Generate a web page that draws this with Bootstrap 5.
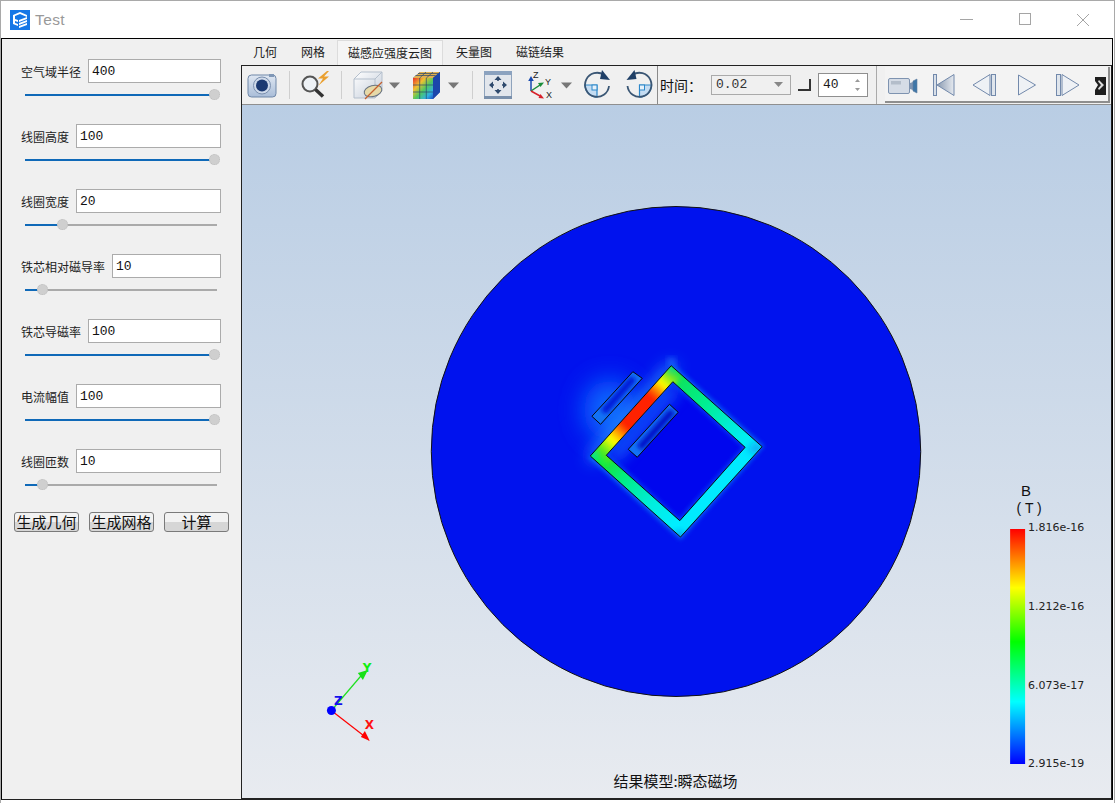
<!DOCTYPE html>
<html lang="zh">
<head>
<meta charset="utf-8">
<title>Test</title>
<link href="https://cdn.jsdelivr.net/npm/bootstrap@5.3.0/dist/css/bootstrap.min.css" rel="stylesheet">
<style>
html,body{margin:0;height:100%;overflow:hidden;background:#fff}
body{font-family:"Noto Sans CJK SC","Liberation Sans",sans-serif;font-size:12px;color:#1a1a1a}
.win{width:1115px;height:803px;border:1px solid #a9a9a9;border-bottom:0;display:flex;flex-direction:column;background:#fff}
.ttl{height:37px;flex:none;display:flex;align-items:center;padding-left:9px;background:#fff}
.ttl-name{font-family:"Liberation Sans",sans-serif;font-size:15.5px;color:#999;margin-left:5px;letter-spacing:.4px;padding-top:1px}
.ttl-btns{margin-left:auto;display:flex;padding-right:2px}
.ttl-btn{width:58px;height:37px;display:flex;align-items:center;justify-content:center}
.body-wrap{flex:1;display:flex;border:1px solid #000;border-bottom:1px solid #222;min-height:0;margin-right:1px;margin-bottom:3px;background:#f0f0f0}
.side{width:239px;flex:none;padding:20px 20px 0 19px;background:#f0f0f0}
.prm{height:65px}
.prm-top{display:flex;align-items:center;gap:7px;height:24px}
.prm-lab{font-size:12px;white-space:nowrap;color:#222;padding-top:2px}
.prm-box{flex:1;min-width:0;height:24px;border:1px solid #ababab;background:#fff;font-family:"Liberation Mono",monospace;font-size:13px;line-height:22px;padding:1px 0 0 3px;color:#111}
.sld{height:2px;margin:11px 4px 0 4px;background:#aaa;position:relative}
.sld-fill{height:2px;background:#0f69b8}
.sld-kn{position:absolute;top:-5px;width:11px;height:11px;border-radius:50%;background:#cfcfcf;border:1px dotted #bdbdbd}
.acts{display:flex;gap:10px;margin-top:-2px;margin-left:-7px;margin-right:-10px}
.act{width:65px;height:20px;flex:none;padding:0;border:1px solid #7a7a7a;border-radius:3px;background:linear-gradient(#f2f2f2 50%,#d6d6d6 50%);font-size:15px;line-height:16px;color:#111;font-family:inherit;white-space:nowrap;overflow:hidden}
.main{flex:1;min-width:0;display:flex;flex-direction:column}
.tabbar{height:26px;flex:none;display:flex;align-items:flex-end;background:#f0f0f0}
.tb{height:24px;padding:0 12px;font-size:12px;line-height:21px;color:#222}
.tb-on{height:25px;line-height:23px;background:#f5f5f5;border:1px solid #dcdcdc;border-bottom:0;padding:0 10px;margin-right:1px}
.view{flex:1;min-height:0;border:1px solid #222;display:flex;flex-direction:column;background:#f0f0f0}
.tools{height:39px;flex:none;display:flex;align-items:stretch;background:#f0f0f0;border-bottom:1px solid #8f8f8f;overflow:hidden}
.tool-ic{display:block;flex:none}
.time-wrap{display:flex;align-items:center;height:38px;border-left:1px solid #8a8a8a;border-right:1px solid #aaa;padding-left:2px;flex:none;width:220px}
.time-lab{font-size:14px;width:51px;flex:none;color:#111;white-space:nowrap}
.combo{width:80px;height:20px;flex:none;border:1px solid #aaa;background:#f0f0f0;font-family:"Liberation Mono",monospace;font-size:13px;padding-left:4px;color:#333;display:flex;align-items:center;justify-content:space-between;padding-right:7px}
.spin{width:50px;height:24px;flex:none;border:1px solid #8f8f8f;background:#fff;font-family:"Liberation Mono",monospace;font-size:13px;padding-left:4px;display:flex;align-items:center;justify-content:space-between;padding-right:6px}
.chk{width:13px;height:12px;flex:none;margin:0 7px;border-right:2px solid #333;border-bottom:2px solid #333}
.player{flex:1;min-width:0;margin:1px 1px 1px 8px;display:flex;background:#f3f3f3;border-bottom:2px solid #8e8e8e;border-right:2px solid #8e8e8e;overflow:hidden}
.scene{flex:1;min-height:0;display:block;width:100%}
.scene text{font-family:"DejaVu Sans","Liberation Sans",sans-serif}
.scene .lg-h{font-family:"Liberation Sans",sans-serif}
.scene .cap{font-family:"Noto Sans CJK SC",sans-serif}
</style>
</head>
<body>
<div class="win">
  <div class="ttl">
    <svg width="20" height="20" viewBox="0 0 20 20"><rect width="20" height="20" fill="#1677e6"/><path d="M3 5l7-3 7 3v2l-7-3-5 2v3l3 1v2l-3-1v2l3 1v2l-5-2zM9 10l8-3v2l-8 3zM9 13l8-3v2l-8 3zM9 16l8-3v2l-8 3z" fill="#fff"/></svg>
    <span class="ttl-name">Test</span>
    <div class="ttl-btns">
      <div class="ttl-btn"><svg width="14" height="2"><rect width="13" height="1" fill="#a5a5a5"/></svg></div>
      <div class="ttl-btn"><svg width="13" height="13"><rect x=".5" y=".5" width="11" height="11" fill="none" stroke="#a5a5a5"/></svg></div>
      <div class="ttl-btn"><svg width="14" height="14"><path d="M1 1l12 12M13 1L1 13" stroke="#a5a5a5" fill="none"/></svg></div>
    </div>
  </div>
  <div class="body-wrap">
    <div class="side">
      <div class="prm"><div class="prm-top"><span class="prm-lab">空气域半径</span><div class="prm-box">400</div></div><div class="sld"><div class="sld-fill" style="width:100%"></div><div class="sld-kn" style="left:184px"></div></div></div>
      <div class="prm"><div class="prm-top"><span class="prm-lab">线圈高度</span><div class="prm-box">100</div></div><div class="sld"><div class="sld-fill" style="width:100%"></div><div class="sld-kn" style="left:184px"></div></div></div>
      <div class="prm"><div class="prm-top"><span class="prm-lab">线圈宽度</span><div class="prm-box">20</div></div><div class="sld"><div class="sld-fill" style="width:19%"></div><div class="sld-kn" style="left:32px"></div></div></div>
      <div class="prm"><div class="prm-top"><span class="prm-lab">铁芯相对磁导率</span><div class="prm-box">10</div></div><div class="sld"><div class="sld-fill" style="width:9%"></div><div class="sld-kn" style="left:12px"></div></div></div>
      <div class="prm"><div class="prm-top"><span class="prm-lab">铁芯导磁率</span><div class="prm-box">100</div></div><div class="sld"><div class="sld-fill" style="width:100%"></div><div class="sld-kn" style="left:184px"></div></div></div>
      <div class="prm"><div class="prm-top"><span class="prm-lab">电流幅值</span><div class="prm-box">100</div></div><div class="sld"><div class="sld-fill" style="width:100%"></div><div class="sld-kn" style="left:184px"></div></div></div>
      <div class="prm"><div class="prm-top"><span class="prm-lab">线圈匝数</span><div class="prm-box">10</div></div><div class="sld"><div class="sld-fill" style="width:9%"></div><div class="sld-kn" style="left:12px"></div></div></div>
      <div class="acts"><button class="act" type="button">生成几何</button><button class="act" type="button">生成网格</button><button class="act" type="button">计算</button></div>
    </div>
    <div class="main">
      <div class="tabbar"><div class="tb">几何</div><div class="tb">网格</div><div class="tb tb-on">磁感应强度云图</div><div class="tb">矢量图</div><div class="tb">磁链结果</div></div>
      <div class="view">
        <div class="tools">
          <svg class="tool-ic" width="415" height="38" viewBox="0 0 415 38">
            <defs>
              <linearGradient id="gb" x1="0" x2="0" y1="0" y2="1"><stop offset="0" stop-color="#dfe7f2"/><stop offset="1" stop-color="#a9bdd8"/></linearGradient>
              <linearGradient id="gc" x1="0" x2="1" y1="0" y2="1"><stop offset="0" stop-color="#fff"/><stop offset="1" stop-color="#c3ccd9"/></linearGradient>
              <linearGradient id="gs" x1="0" x2="1" y1="0" y2="0"><stop offset="0" stop-color="#8a9ab0"/><stop offset="1" stop-color="#e6eaf0"/></linearGradient>
              <linearGradient id="gcube" x1="0" x2="1" y1="0" y2="1"><stop offset="0" stop-color="#e8302a"/><stop offset=".3" stop-color="#f0c030"/><stop offset=".55" stop-color="#50c860"/><stop offset=".8" stop-color="#30b0e0"/><stop offset="1" stop-color="#1a50c8"/></linearGradient>
            </defs>
            <g><rect x="6" y="9" width="28" height="22" rx="3.500" fill="url(#gb)" stroke="#6f87a8"/><rect x="27" y="8" width="5" height="3" fill="#7f97b6"/><circle cx="20" cy="19.500" r="8.500" fill="#cfdaea" stroke="#7a8fae"/><circle cx="20" cy="19.500" r="6" fill="#1c3a72"/></g>
            <rect x="47" y="5" width="1" height="28" fill="#cfcfcf"/>
            <g><circle cx="68" cy="18" r="7.500" fill="#eef2f6" stroke="#555" stroke-width="2"/><path d="M73.500 23.500l7.500 7" stroke="#333" stroke-width="3.500"/><path d="M85 5l-9 7.500h5l-4.500 7 10.500-9h-5l5-5.500z" fill="#eaa030"/></g>
            <rect x="99" y="5" width="1" height="28" fill="#cfcfcf"/>
            <g><path d="M112 13l7-7h21v19l-7 7h-21z" fill="url(#gc)" stroke="#b4bfcc"/><path d="M112 13h21v19M133 13l7-7" fill="none" stroke="#b4bfcc"/><ellipse cx="131" cy="25" rx="9" ry="5.500" fill="#e6d9a8" stroke="#6a7480" transform="rotate(-15 131 25)"/><path d="M123 33L140 16" stroke="#c4602f" stroke-width="1.200"/></g>
            <path d="M147 16.500h11l-5.500 6z" fill="#777"/>
            <g><path d="M171 12l7-6h20v20l-7 7h-20z" fill="#1b3f9e"/><path d="M171 12h20v21h-20z" fill="url(#gcube)"/><path d="M171 12l7-6h20l-7 6z" fill="#e0b050"/><path d="M191 12l7-6v20l-7 7z" fill="#1b46ab"/><path d="M177.700 12v21M184.300 12v21M171 19h20M171 26h20M173.500 9.500h20M176 7.500h20M184 6l-6.300 6M191 6l-6.700 6" stroke="#28476e" stroke-width=".7" fill="none"/></g>
            <path d="M206 16.500h11l-5.500 6z" fill="#777"/>
            <rect x="230" y="5" width="1" height="28" fill="#cfcfcf"/>
            <g><rect x="242.500" y="5.500" width="27" height="27" fill="#e2e6ec" stroke="#8fa3bc"/><rect x="242" y="5" width="28" height="4" fill="#8ba2bf"/><rect x="242" y="30" width="28" height="3" fill="#7a90ac"/><path d="M256 15v-2M256 23v2M252 19h-2M260 19h2" stroke="#2f4a6d" stroke-width="1.600"/><path d="M256 10l-3.500 4h7zM256 28l-3.500-4h7zM247 19l4-3.500v7zM265 19l-4-3.500v7z" fill="#2f4a6d"/></g>
            <g><path d="M289 14v11" stroke="#1749b0" stroke-width="1.500"/><path d="M289 10l-2.800 5h5.600z" fill="#1749b0"/><path d="M289 25l9-6" stroke="#1a8d3a" stroke-width="1.500"/><path d="M302 16.500l-6 .5 2.500 4z" fill="#1a8d3a"/><path d="M289 25l9 5" stroke="#d8202a" stroke-width="1.500"/><path d="M302 32.500l-5.500-.5 2-4z" fill="#d8202a"/><text x="291" y="12" font-size="9" font-family="Liberation Sans" fill="#222">Z</text><text x="303" y="19" font-size="9" font-family="Liberation Sans" fill="#222">Y</text><text x="304" y="32" font-size="9" font-family="Liberation Sans" fill="#222">X</text></g>
            <path d="M319 16.500h11l-5.500 6z" fill="#777"/>
            <path d="M355 19H343A12 12 0 0 0 355 31Z" fill="#c4dcf2" stroke="#2c87c9" stroke-width="1.200"/><rect x="350" y="19" width="5" height="5" fill="#e6f1fa" stroke="#2c87c9"/>
            <path d="M367 20A12 12 0 1 1 362 9" fill="none" stroke="#3a5674" stroke-width="1.800"/><path d="M360 4l8 10-10-1z" fill="#1f3f66"/>
            <path d="M397.500 19H409.500A12 12 0 0 1 397.500 31Z" fill="#c4dcf2" stroke="#2c87c9" stroke-width="1.200"/><rect x="397.500" y="19" width="5" height="5" fill="#e6f1fa" stroke="#2c87c9"/>
            <path d="M385.500 20A12 12 0 1 0 390.500 9" fill="none" stroke="#3a5674" stroke-width="1.800"/><path d="M392.500 4l-8 10 10-1z" fill="#1f3f66"/>
          </svg>
          <div class="time-wrap">
            <span class="time-lab">时间：</span>
            <div class="combo"><span>0.02</span><svg width="9" height="6"><path d="M0 0h9L4.500 5z" fill="#888"/></svg></div>
            <div class="chk"></div>
            <div class="spin"><span>40</span><svg width="7" height="14"><path d="M3.500 1L1 4h5zM3.500 13L1 10h5z" fill="#999"/></svg></div>
          </div>
          <div class="player">
            <svg width="222" height="36" viewBox="0 1 222 36">
              <g><rect x="3.500" y="12.500" width="21" height="15" rx="1.500" fill="#d5dce6" stroke="#7e93b0"/><rect x="6" y="15" width="10" height="3.500" fill="#b3bdca"/><path d="M25 17l3-1v8l-3-1z" fill="#7f96b4"/><path d="M28 15l4-2v14l-4-2z" fill="#3f77a8" stroke="#5f7ea0" stroke-width=".6"/></g>
              <g><rect x="48.500" y="8.500" width="3" height="21" fill="#d8dfe8" stroke="#7289ab"/><path d="M52 19l17-10.500v21z" fill="url(#gs)" stroke="#7289ab"/></g>
              <g><path d="M88 19l17-10.500v21z" fill="#eef1f5" stroke="#7289ab"/><rect x="106.500" y="8.500" width="4" height="21" fill="#dfe5ec" stroke="#7289ab"/></g>
              <g><path d="M133.500 9l17 10-17 10z" fill="#eef1f5" stroke="#7289ab"/></g>
              <g><rect x="171.500" y="8.500" width="4" height="21" fill="#dfe5ec" stroke="#7289ab"/><path d="M177 8.500l17 10.500-17 10.500z" fill="#eef1f5" stroke="#7289ab"/></g>
              <path d="M210 11h11v18h-11v-5l3-5-3-4z" fill="#1e1e1e"/><path d="M214 14l5 5-5 5-1-1.500 3-3.500-3-3.500z" fill="#ddd"/>
            </svg>
          </div>
        </div>
        <svg class="scene" viewBox="0 0 870 693" preserveAspectRatio="none">
          <defs>
            <linearGradient id="bgg" x1="0" x2="0" y1="0" y2="1"><stop offset="0" stop-color="#b9cde4"/><stop offset="1" stop-color="#e8ebf0"/></linearGradient>
            <filter id="bl2" x="-30%" y="-30%" width="160%" height="160%"><feGaussianBlur stdDeviation="2"/></filter>
            <filter id="bl3" x="-30%" y="-30%" width="160%" height="160%"><feGaussianBlur stdDeviation="3.500"/></filter>
            <filter id="bl9" x="-60%" y="-60%" width="220%" height="220%" filterUnits="objectBoundingBox"><feGaussianBlur stdDeviation="8"/></filter>
            <filter id="bl22" x="-100%" y="-100%" width="300%" height="300%"><feGaussianBlur stdDeviation="13"/></filter>
            <clipPath id="cring"><path clip-rule="evenodd" d="M429.700 260.700L520.700 341.700L439 432L348.700 351ZM431.300 276.700L503.700 342.300L438.300 415.700L364.700 350.300Z"/></clipPath>
            <clipPath id="cdisc"><circle cx="434.500" cy="346.500" r="245"/></clipPath>
            <clipPath id="ccoil1"><path d="M391.300 266.700L400.700 273.300L359 319.300L350.300 311.300Z"/></clipPath>
            <clipPath id="ccoil2"><path d="M428 299.300L436.700 307.300L395.700 352.300L386.700 344.300Z"/></clipPath>
            <clipPath id="cinner"><path d="M431.300 276.700L503.700 342.300L438.300 415.700L364.700 350.300Z"/></clipPath>
            <linearGradient id="limb" gradientUnits="userSpaceOnUse" x1="348.700" y1="351" x2="429.700" y2="260.700">
              <stop offset="0" stop-color="#00f050"/><stop offset=".1" stop-color="#50e820"/><stop offset=".22" stop-color="#ffff00"/><stop offset=".3" stop-color="#ff9900"/><stop offset=".38" stop-color="#ff2200"/><stop offset=".7" stop-color="#ff2200"/><stop offset=".78" stop-color="#ff9900"/><stop offset=".84" stop-color="#ffff00"/><stop offset=".92" stop-color="#80e820"/><stop offset="1" stop-color="#10e050"/>
            </linearGradient>
            <linearGradient id="topl" gradientUnits="userSpaceOnUse" x1="432" y1="268" x2="512" y2="340">
              <stop offset="0" stop-color="#10e050"/><stop offset=".4" stop-color="#00ee90"/><stop offset=".75" stop-color="#00eedd"/><stop offset="1" stop-color="#00eeff"/>
            </linearGradient>
            <linearGradient id="leftl" gradientUnits="userSpaceOnUse" x1="356" y1="352" x2="432" y2="420">
              <stop offset="0" stop-color="#20e020"/><stop offset=".35" stop-color="#00ee88"/><stop offset=".7" stop-color="#00eedd"/><stop offset="1" stop-color="#00eeff"/>
            </linearGradient>
            <linearGradient id="leg" x1="0" x2="0" y1="0" y2="1"><stop offset="0" stop-color="#ff0000"/><stop offset=".25" stop-color="#ffff00"/><stop offset=".48" stop-color="#00ff00"/><stop offset=".735" stop-color="#00ffff"/><stop offset="1" stop-color="#0000ff"/></linearGradient>
          </defs>
          <rect width="870" height="693" fill="url(#bgg)"/>
          <circle cx="434.500" cy="346.500" r="245" fill="#0012ee" stroke="#111" stroke-width="1"/>
          <g clip-path="url(#cdisc)">
            <ellipse cx="368" cy="305" rx="26" ry="30" fill="#0a70ff" opacity=".95" filter="url(#bl22)"/>
            <polygon points="346,352 428,258 436,262 352,358" fill="#2aa0ff" filter="url(#bl9)"/>
            <polygon points="430,258 523,341 439,435 346,352 365,350 438,416 504,342 431,277" fill="#0a78f5" opacity=".75" filter="url(#bl2)"/>
            <circle cx="430" cy="257" r="4" fill="#30a0ff" opacity=".6" filter="url(#bl3)"/>
          </g>
          <path d="M431.300 276.700L503.700 342.300L438.300 415.700L364.700 350.300Z" fill="#0006ee"/>
          <g clip-path="url(#cinner)">
            <polygon points="366,350 431,277 438,284 374,358" fill="#1478ff" opacity=".95" filter="url(#bl9)"/>
            <path d="M431 277L504 342L438 416L365 350Z" fill="none" stroke="#0a50f5" stroke-width="3" filter="url(#bl2)"/>
          </g>
          <g clip-path="url(#cring)">
            <rect x="340" y="250" width="190" height="190" fill="#00eaff"/>
            <path d="M429.700 260.700L520 342L503 342L431 276Z" fill="url(#topl)"/>
            <path d="M348.700 351L439 432L438 416L364.700 350.300Z" fill="url(#leftl)"/>
            <path d="M429.700 250L442 270L364.700 362L340 351Z" fill="url(#limb)" filter="url(#bl2)"/>
            <path d="M515 335L525 345L515 350L505 345Z" fill="#0ab0f5" filter="url(#bl3)"/>
            <path d="M437 425L445 432L437 438L430 432Z" fill="#0a90f5" filter="url(#bl3)"/>
            <path d="M426 258L434 262L430 268Z" fill="#00c8e0" filter="url(#bl3)"/>
            <path d="M346 349L352 345L356 356Z" fill="#00d8e8" filter="url(#bl3)"/>
          </g>
          <g clip-path="url(#ccoil1)"><path d="M391.300 266.700L400.700 273.300L359 319.300L350.300 311.300Z" fill="#1272f5"/><path d="M392 273L362 307" stroke="#0018d8" stroke-width="7" filter="url(#bl2)"/></g>
          <g clip-path="url(#ccoil2)"><path d="M428 299.300L436.700 307.300L395.700 352.300L386.700 344.300Z" fill="#1272f5"/><path d="M431 306L398 343" stroke="#000ec8" stroke-width="7" filter="url(#bl2)"/></g>
          <g fill="none" stroke="#0a0a0a" stroke-width="1" shape-rendering="crispEdges">
            <path d="M429.700 260.700L520.700 341.700L439 432L348.700 351Z"/>
            <path d="M431.300 276.700L503.700 342.300L438.300 415.700L364.700 350.300Z"/>
            <path d="M391.300 266.700L400.700 273.300L359 319.300L350.300 311.300Z"/>
            <path d="M428 299.300L436.700 307.300L395.700 352.300L386.700 344.300Z"/>
          </g>
          <path d="M90 605L119 571" stroke="#1fe01f" stroke-width="1.200"/><path d="M126 565l-10 3 5 7z" fill="#18e018"/>
          <path d="M90 606L121 630" stroke="#f00" stroke-width="1.200"/><path d="M128 636l-9-4 4-6z" fill="#f00"/>
          <circle cx="89.500" cy="605.500" r="4.500" fill="#0000ff"/>
          <text x="92" y="600" font-size="12" font-weight="700" fill="#1111ee">Z</text>
          <text x="121" y="567" font-size="12" font-weight="700" fill="#11ee11">Y</text>
          <text x="123" y="624" font-size="12" font-weight="700" fill="#ff1111">X</text>
          <rect x="769" y="424" width="15" height="235" fill="url(#leg)"/>
          <text class="lg-h" x="780" y="391.500" font-size="15" fill="#111">B</text>
          <text class="lg-h" x="775.500" y="408.500" font-size="14" fill="#111">( T )</text>
          <g font-size="11" fill="#222"><text x="787" y="426">1.816e-16</text><text x="787" y="505">1.212e-16</text><text x="787" y="584">6.073e-17</text><text x="787" y="662">2.915e-19</text></g>
          <text class="cap" x="434" y="682" text-anchor="middle" font-size="15" fill="#111">结果模型:瞬态磁场</text>
        </svg>
      </div>
    </div>
  </div>
</div>
</body>
</html>
